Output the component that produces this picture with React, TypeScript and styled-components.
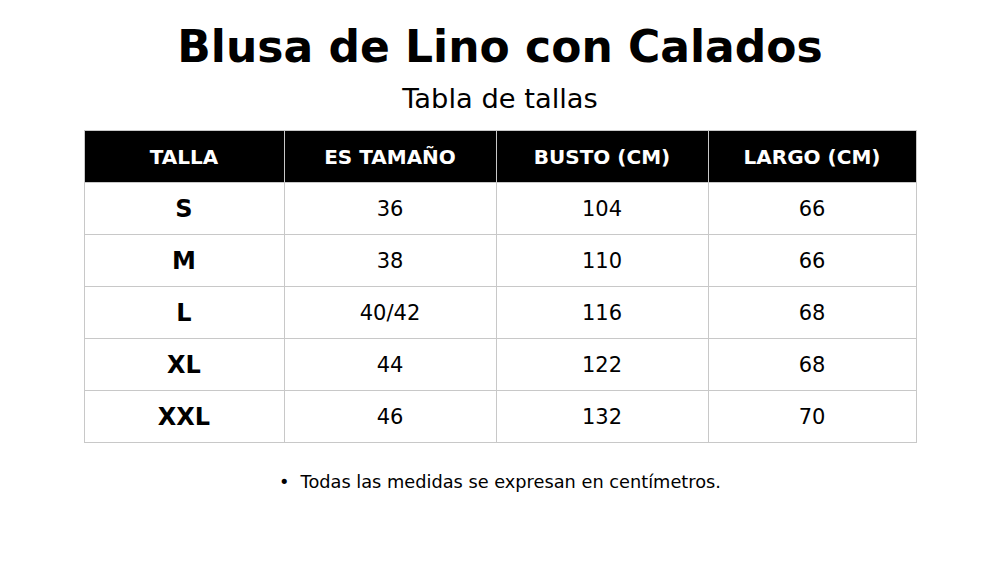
import React from "react";
import styled, { createGlobalStyle } from "styled-components";

const Global = createGlobalStyle`
  html, body { margin: 0; padding: 0; background: #fff; }
  body { font-family: "DejaVu Sans", sans-serif; color: #000; }
`;

const Page = styled.div`
  width: 1000px;
  height: 563px;
  display: flex;
  flex-direction: column;
  align-items: center;
  box-sizing: border-box;
  padding-top: 20px;
`;

const Title = styled.h1`
  margin: 0;
  font-size: 44px;
  line-height: 54px;
  font-weight: bold;
`;

const Subtitle = styled.h2`
  margin: 0;
  font-size: 27.3px;
  line-height: 50px;
  font-weight: normal;
`;

const Table = styled.table`
  margin-top: 6px;
  width: 832px;
  border-collapse: collapse;
  table-layout: fixed;
`;

const Th = styled.th`
  background: #000;
  color: #fff;
  font-size: 20px;
  font-weight: bold;
  height: 51px;
  border: 1px solid #c8c8c8;
  padding: 0;
`;

const Td = styled.td<{ $bold?: boolean }>`
  height: 51px;
  border: 1px solid #c8c8c8;
  text-align: center;
  padding: 0;
  font-size: ${(p) => (p.$bold ? "24px" : "21px")};
  font-weight: ${(p) => (p.$bold ? "bold" : "normal")};
`;

const Notes = styled.ul`
  margin: 29px 0 0;
  padding: 0;
  list-style: none;
  font-size: 17.75px;
`;

const Note = styled.li`
  &::before {
    content: "•";
    margin-right: 11px;
  }
`;

const rows = [
  ["S", "36", "104", "66"],
  ["M", "38", "110", "66"],
  ["L", "40/42", "116", "68"],
  ["XL", "44", "122", "68"],
  ["XXL", "46", "132", "70"],
];

export default function App() {
  return (
    <Page>
      <Global />
      <Title>Blusa de Lino con Calados</Title>
      <Subtitle>Tabla de tallas</Subtitle>
      <Table>
        <colgroup>
          <col style={{ width: 200 }} />
          <col style={{ width: 212 }} />
          <col style={{ width: 212 }} />
          <col style={{ width: 208 }} />
        </colgroup>
        <thead>
          <tr>
            <Th>TALLA</Th>
            <Th>ES TAMAÑO</Th>
            <Th>BUSTO (CM)</Th>
            <Th>LARGO (CM)</Th>
          </tr>
        </thead>
        <tbody>
          {rows.map((r) => (
            <tr key={r[0]}>
              <Td $bold>{r[0]}</Td>
              <Td>{r[1]}</Td>
              <Td>{r[2]}</Td>
              <Td>{r[3]}</Td>
            </tr>
          ))}
        </tbody>
      </Table>
      <Notes>
        <Note>Todas las medidas se expresan en centímetros.</Note>
      </Notes>
    </Page>
  );
}
